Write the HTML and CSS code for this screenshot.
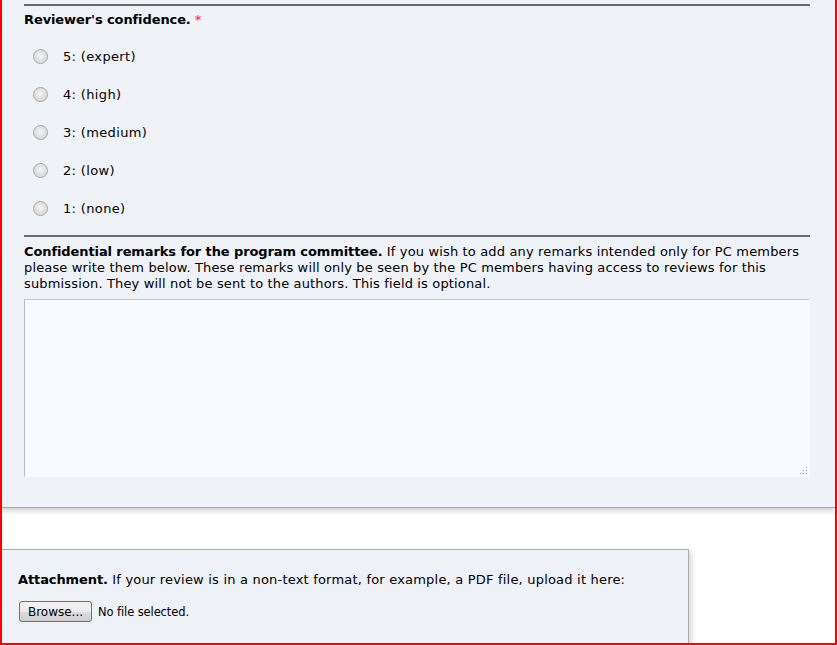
FILE: index.html
```html
<!DOCTYPE html>
<html>
<head>
<meta charset="utf-8">
<link rel="stylesheet" href="styles.css">
</head>
<body>
<div class="frame">
  <div class="panel">
    <div class="rule"></div>
    <div class="heading"><b class="strong">Reviewer's confidence.</b> <span class="req">*</span></div>
    <div class="options">
      <label class="opt"><input type="radio" name="conf" class="radio"><span class="lbl">5: (expert)</span></label>
      <label class="opt"><input type="radio" name="conf" class="radio"><span class="lbl">4: (high)</span></label>
      <label class="opt"><input type="radio" name="conf" class="radio"><span class="lbl">3: (medium)</span></label>
      <label class="opt"><input type="radio" name="conf" class="radio"><span class="lbl">2: (low)</span></label>
      <label class="opt"><input type="radio" name="conf" class="radio"><span class="lbl">1: (none)</span></label>
    </div>
    <div class="rule rule2"></div>
    <p class="desc"><b class="strong">Confidential remarks for the program committee.</b> If you wish to add any remarks intended only for PC members please write them below. These remarks will only be seen by the PC members having access to reviews for this submission. They will not be sent to the authors. This field is optional.</p>
    <div class="tawrap">
      <textarea class="ta"></textarea>
      <span class="grip"></span>
    </div>
  </div>
  <div class="attach">
    <p class="adesc"><b class="strong">Attachment.</b> If your review is in a non-text format, for example, a PDF file, upload it here:</p>
    <div class="file">
      <button class="browse" type="button">Browse...</button>
      <span class="nofile">No file selected.</span>
    </div>
  </div>
</div>
</body>
</html>
```
FILE: styles.css
```css
html, body {
  margin: 0;
  padding: 0;
  background: #fff;
}
body {
  font-family: "DejaVu Sans", Verdana, sans-serif;
  font-size: 13px;
  color: #000;
  overflow: hidden;
}
.frame {
  height: 643px;
  border: 2px solid #ff0000;
  border-top: 0;
  box-sizing: content-box;
  width: 833px;
  overflow: hidden;
}
.panel {
  background: #eff2f7;
  padding: 4px 25px 30px 22px;
  border-bottom: 1px solid #a9a9a9;
  box-shadow: 0 3px 5px rgba(0,0,0,0.18);
  position: relative;
}
.rule {
  height: 2px;
  background: #6a6a6a;
}
.heading {
  margin-top: 6px;
  line-height: 16px;
  height: 16px;
}
.strong {
  letter-spacing: -0.1px;
}
.req {
  color: #ff2020;
}
.options {
  margin-top: 9px;
  display: flex;
  flex-direction: column;
}
.opt {
  height: 38px;
  display: flex;
  align-items: center;
  padding-left: 9px;
}
.lbl {
  letter-spacing: 0.35px;
}
.radio {
  appearance: none;
  -webkit-appearance: none;
  margin: 0 15px 0 0;
  width: 15px;
  height: 15px;
  border-radius: 50%;
  border: 1px solid #a4a4a4;
  background: radial-gradient(circle at 50% 45%, #f4f4f4 0, #e2e2e2 45%, #c9c9c9 100%);
  box-shadow: inset 0 0 1px #fff;
  box-sizing: border-box;
}
.rule2 {
  margin-top: 8px;
}
.desc {
  margin: 7px 0 0;
  line-height: 16px;
  letter-spacing: 0.15px;
}
.tawrap {
  margin-top: 7px;
  position: relative;
  height: 178px;
}
.ta {
  display: block;
  width: 100%;
  height: 178px;
  box-sizing: border-box;
  margin: 0;
  border: 1px solid #f7faff;
  border-top-color: #c3c3c3;
  border-left-color: #b9b9b9;
  background: #f7faff;
  resize: none;
  outline: none;
}
.grip {
  position: absolute;
  right: 3px;
  bottom: 3px;
  width: 8px;
  height: 8px;
  background:
    radial-gradient(circle, #9a9a9a 0.8px, transparent 1px) 0 0 / 3px 3px;
  clip-path: polygon(100% 0, 100% 100%, 0 100%);
}
.attach {
  margin-top: 41px;
  width: 670px;
  height: 200px;
  background: #eef1f6;
  border-top: 1px solid #acacac;
  border-right: 1px solid #acacac;
  box-shadow: 3px 2px 5px rgba(0,0,0,0.15);
  padding: 22px 0 0 16px;
}
.adesc {
  margin: 0;
  line-height: 16px;
  letter-spacing: 0.2px;
}
.file {
  margin-top: 13px;
  display: flex;
  align-items: center;
  gap: 6px;
  padding-left: 1px;
}
.browse {
  width: 73px;
  height: 21px;
  padding: 0;
  font-family: "DejaVu Sans", Verdana, sans-serif;
  font-size: 12px;
  color: #000;
  border: 1px solid #707070;
  border-radius: 3px;
  background: linear-gradient(#f2f2f2 0, #ebebeb 50%, #dddddd 51%, #cfcfcf 100%);
}
.nofile {
  font-size: 11.5px;
  letter-spacing: -0.1px;
}
```
